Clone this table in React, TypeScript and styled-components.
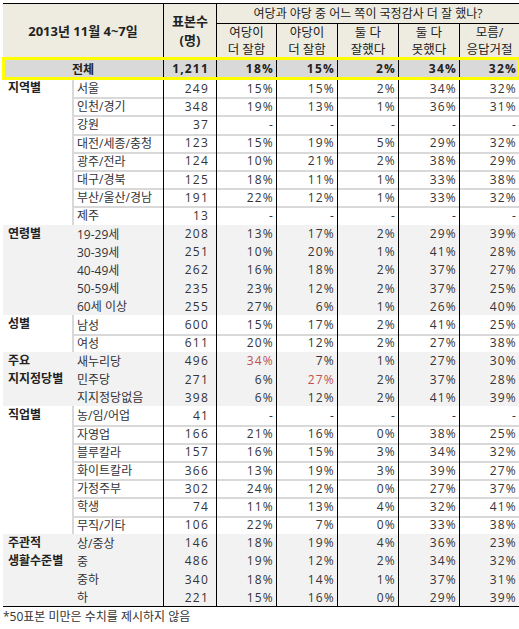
import React from 'react';
import styled, { createGlobalStyle } from 'styled-components';

const GlobalStyle = createGlobalStyle`
  html, body { margin: 0; padding: 0; background: #ffffff; }
  body {
    font-family: "Open Sans", "Noto Sans CJK KR", sans-serif;
    color: #333338;
    font-size: 12px;
  }
`;

const COLS = '69px 91px 53px 60px 61px 61px 61px 60px';
const BODY_COLS = '91px 53px 60px 61px 61px 61px 60px';
const ROW_H = 18.2;
const SEP = '#d9d9d9';

const Page = styled.div`
  padding: 3px 0 0 3px;
  width: 516px;
`;

const Table = styled.div`
  border-top: 1px solid #000;
  border-bottom: 1px solid #000;
`;

const Header = styled.div`
  display: grid;
  grid-template-columns: ${COLS};
  grid-template-rows: 20px 34px;
  background: #eeece1;
  color: #222;
`;

const HCell = styled.div<{ $col: string; $row: string; $bold?: boolean; $left?: boolean; $bottom?: boolean; $size?: number }>`
  grid-column: ${p => p.$col};
  grid-row: ${p => p.$row};
  display: flex;
  align-items: center;
  justify-content: center;
  text-align: center;
  white-space: pre-line;
  font-size: ${p => p.$size ?? 12}px;
  line-height: ${p => (p.$bold ? 19 : 17)}px;
  font-weight: ${p => (p.$bold ? 700 : 400)};
  border-left: ${p => (p.$left ? '1px solid #000' : 'none')};
  border-bottom: ${p => (p.$bottom ? '1px solid #000' : 'none')};
`;

const TotalRow = styled.div`
  position: relative;
  z-index: 1;
  display: grid;
  grid-template-columns: ${COLS};
  height: 21px;
  background: #d9d9d9;
  font-weight: 700;
  color: #222;
  outline: 3px solid #ffff00;
  outline-offset: -2px;
`;

const TotalLabel = styled.div`
  grid-column: 1 / 3;
  display: flex;
  align-items: center;
  justify-content: center;
`;

const Group = styled.div<{ $shaded?: boolean }>`
  display: grid;
  grid-template-columns: 69px 447px;
  background: ${p => (p.$shaded ? '#f2f2f2' : '#ffffff')};
`;

const GroupLabel = styled.div`
  font-weight: 700;
  color: #222;
  padding-left: 5px;
  line-height: 18px;
  white-space: pre-line;
`;

const Rows = styled.div`
  display: flex;
  flex-direction: column;
`;

const Row = styled.div`
  display: grid;
  grid-template-columns: ${BODY_COLS};
  height: ${ROW_H}px;
`;

const LabelCell = styled.div<{ $sep?: boolean; $edge?: boolean }>`
  display: flex;
  align-items: center;
  padding-left: 5px;
  white-space: nowrap;
  box-shadow: ${p => {
    const s: string[] = [];
    if (p.$edge) s.push(`inset 2px 0 0 ${SEP}`);
    if (p.$sep) s.push(`inset 0 2px 0 ${SEP}`);
    return s.length ? s.join(', ') : 'none';
  }};
`;

const NumCell = styled.div<{ $sep?: boolean; $red?: boolean; $pad: number }>`
  display: flex;
  align-items: center;
  justify-content: flex-end;
  border-left: 1px solid #000;
  padding-right: ${p => p.$pad}px;
  letter-spacing: 1.2px;
  color: ${p => (p.$red ? '#c0504d' : 'inherit')};
  box-shadow: ${p => (p.$sep ? `inset 0 2px 0 ${SEP}` : 'none')};
`;

const Note = styled.p`
  margin: 2px 0 0 0;
  line-height: 16px;
  color: #333;
`;

type DataRow = { label: string; n: string; v: string[]; red?: number };
type GroupData = { name: string; shaded: boolean; rows: DataRow[] };

const dash = ['-', '-', '-', '-', '-'];

const groups: GroupData[] = [
  {
    name: '지역별',
    shaded: false,
    rows: [
      { label: '서울', n: '249', v: ['15%', '15%', '2%', '34%', '32%'] },
      { label: '인천/경기', n: '348', v: ['19%', '13%', '1%', '36%', '31%'] },
      { label: '강원', n: '37', v: dash },
      { label: '대전/세종/충청', n: '123', v: ['15%', '19%', '5%', '29%', '32%'] },
      { label: '광주/전라', n: '124', v: ['10%', '21%', '2%', '38%', '29%'] },
      { label: '대구/경북', n: '125', v: ['18%', '11%', '1%', '33%', '38%'] },
      { label: '부산/울산/경남', n: '191', v: ['22%', '12%', '1%', '33%', '32%'] },
      { label: '제주', n: '13', v: dash },
    ],
  },
  {
    name: '연령별',
    shaded: true,
    rows: [
      { label: '19-29세', n: '208', v: ['13%', '17%', '2%', '29%', '39%'] },
      { label: '30-39세', n: '251', v: ['10%', '20%', '1%', '41%', '28%'] },
      { label: '40-49세', n: '262', v: ['16%', '18%', '2%', '37%', '27%'] },
      { label: '50-59세', n: '235', v: ['23%', '12%', '2%', '37%', '25%'] },
      { label: '60세 이상', n: '255', v: ['27%', '6%', '1%', '26%', '40%'] },
    ],
  },
  {
    name: '성별',
    shaded: false,
    rows: [
      { label: '남성', n: '600', v: ['15%', '17%', '2%', '41%', '25%'] },
      { label: '여성', n: '611', v: ['20%', '12%', '2%', '27%', '38%'] },
    ],
  },
  {
    name: '주요\n지지정당별',
    shaded: true,
    rows: [
      { label: '새누리당', n: '496', v: ['34%', '7%', '1%', '27%', '30%'], red: 0 },
      { label: '민주당', n: '271', v: ['6%', '27%', '2%', '37%', '28%'], red: 1 },
      { label: '지지정당없음', n: '398', v: ['6%', '12%', '2%', '41%', '39%'] },
    ],
  },
  {
    name: '직업별',
    shaded: false,
    rows: [
      { label: '농/임/어업', n: '41', v: dash },
      { label: '자영업', n: '166', v: ['21%', '16%', '0%', '38%', '25%'] },
      { label: '블루칼라', n: '157', v: ['16%', '15%', '3%', '34%', '32%'] },
      { label: '화이트칼라', n: '366', v: ['13%', '19%', '3%', '39%', '27%'] },
      { label: '가정주부', n: '302', v: ['24%', '12%', '0%', '27%', '37%'] },
      { label: '학생', n: '74', v: ['11%', '13%', '4%', '32%', '41%'] },
      { label: '무직/기타', n: '106', v: ['22%', '7%', '0%', '33%', '38%'] },
    ],
  },
  {
    name: '주관적\n생활수준별',
    shaded: true,
    rows: [
      { label: '상/중상', n: '146', v: ['18%', '19%', '4%', '36%', '23%'] },
      { label: '중', n: '486', v: ['19%', '12%', '2%', '34%', '32%'] },
      { label: '중하', n: '340', v: ['18%', '14%', '1%', '37%', '31%'] },
      { label: '하', n: '221', v: ['15%', '16%', '0%', '29%', '39%'] },
    ],
  },
];

const subHeads = ['여당이\n더 잘함', '야당이\n더 잘함', '둘 다\n잘했다', '둘 다\n못했다', '모름/\n응답거절'];
const totals = ['18%', '15%', '2%', '34%', '32%'];

export default function App() {
  return (
    <Page>
      <GlobalStyle />
      <Table>
        <Header>
          <HCell $col="1 / 3" $row="1 / 3" $bold $size={13}>
            2013년 11월 4~7일
          </HCell>
          <HCell $col="3 / 4" $row="1 / 3" $bold $left $size={13}>
            {'표본수\n(명)'}
          </HCell>
          <HCell $col="4 / 9" $row="1 / 2" $left $bottom>
            여당과 야당 중 어느 쪽이 국정감사 더 잘 했나?
          </HCell>
          {subHeads.map((h, i) => (
            <HCell key={h} $col={`${4 + i} / ${5 + i}`} $row="2 / 3" $left $size={12.5}>
              {h}
            </HCell>
          ))}
        </Header>
        <TotalRow>
          <TotalLabel>전체</TotalLabel>
          <NumCell $pad={7}>1,211</NumCell>
          {totals.map((t, i) => (
            <NumCell key={i} $pad={2}>
              {t}
            </NumCell>
          ))}
        </TotalRow>
        {groups.map(g => (
          <Group key={g.name} $shaded={g.shaded}>
            <GroupLabel>{g.name}</GroupLabel>
            <Rows>
              {g.rows.map((r, ri) => {
                const sep = !g.shaded && ri > 0;
                return (
                  <Row key={r.label}>
                    <LabelCell $sep={sep} $edge={!g.shaded}>
                      {r.label}
                    </LabelCell>
                    <NumCell $sep={sep} $pad={7}>
                      {r.n}
                    </NumCell>
                    {r.v.map((v, vi) => (
                      <NumCell key={vi} $sep={sep} $pad={2} $red={r.red === vi}>
                        {v}
                      </NumCell>
                    ))}
                  </Row>
                );
              })}
            </Rows>
          </Group>
        ))}
      </Table>
      <Note>*50표본 미만은 수치를 제시하지 않음</Note>
    </Page>
  );
}
